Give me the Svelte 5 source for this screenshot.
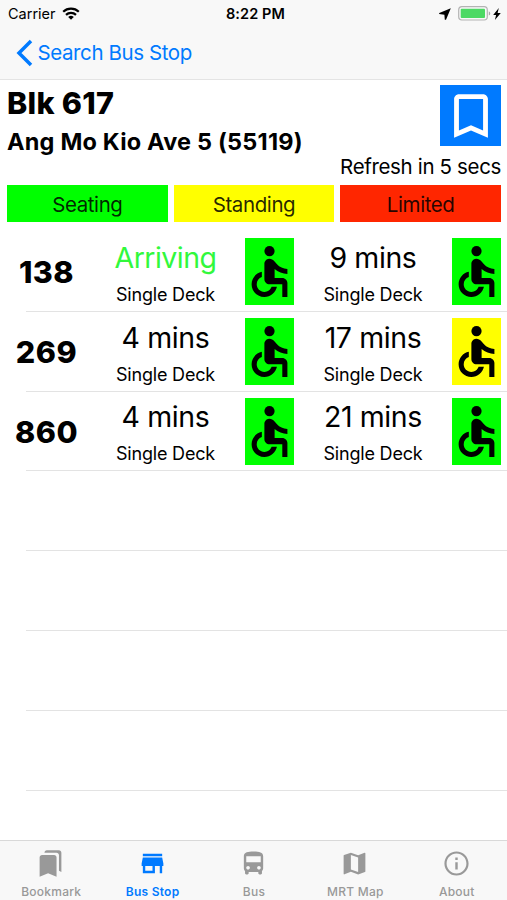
<script>
  const stop = { name: "Blk 617", road: "Ang Mo Kio Ave 5 (55119)" };
  const refreshIn = 5;

  const legend = [
    { label: "Seating", load: "seating" },
    { label: "Standing", load: "standing" },
    { label: "Limited", load: "limited" },
  ];

  const services = [
    {
      number: "138",
      arrivals: [
        { time: "Arriving", deck: "Single Deck", load: "seating" },
        { time: "9 mins", deck: "Single Deck", load: "seating" },
      ],
    },
    {
      number: "269",
      arrivals: [
        { time: "4 mins", deck: "Single Deck", load: "seating" },
        { time: "17 mins", deck: "Single Deck", load: "standing" },
      ],
    },
    {
      number: "860",
      arrivals: [
        { time: "4 mins", deck: "Single Deck", load: "seating" },
        { time: "21 mins", deck: "Single Deck", load: "seating" },
      ],
    },
  ];
  const emptyRows = [1, 2, 3, 4];

  const tabs = [
    { label: "Bookmark", icon: "M19 18l2 1V3c0-1.1-.9-2-2-2H8.99C7.89 1 7 1.9 7 3h10c1.1 0 2 .9 2 2v13zM15 5H5c-1.1 0-2 .9-2 2v16l7-3 7 3V7c0-1.1-.9-2-2-2z" },
    { label: "Bus Stop", icon: "M20 4H4v2h16V4zm1 10v-2l-1-5H4l-1 5v2h1v6h10v-6h4v6h2v-6h1zm-9 4H6v-4h6v4z" },
    { label: "Bus", icon: "M4 16c0 .88.39 1.67 1 2.22V20c0 .55.45 1 1 1h1c.55 0 1-.45 1-1v-1h8v1c0 .55.45 1 1 1h1c.55 0 1-.45 1-1v-1.78c.61-.55 1-1.34 1-2.22V6c0-3.5-3.58-4-8-4s-8 .5-8 4v10zm3.500 1c-.83 0-1.500-.67-1.500-1.500S6.670 14 7.500 14s1.500.67 1.500 1.500S8.330 17 7.500 17zm9 0c-.83 0-1.500-.67-1.500-1.500s.67-1.500 1.500-1.500 1.500.67 1.500 1.500-.67 1.500-1.500 1.500zm1.500-6H6V6h12v5z" },
    { label: "MRT Map", icon: "M20.500 3l-.16.03L15 5.100 9 3 3.360 4.900c-.21.07-.36.25-.36.48V20.500c0 .28.22.5.5.5l.16-.03L9 18.900l6 2.100 5.640-1.900c.21-.07.36-.25.36-.48V3.500c0-.28-.22-.5-.5-.5zM15 19l-6-2.110V5l6 2.110V19z" },
    { label: "About", icon: "M11 17h2v-6h-2v6zm1-15C6.480 2 2 6.480 2 12s4.480 10 10 10 10-4.480 10-10S17.520 2 12 2zm0 18.200c-4.520 0-8.200-3.680-8.200-8.200S7.480 3.800 12 3.800s8.200 3.680 8.200 8.200-3.680 8.200-8.200 8.200zM11 9h2V7h-2v2z" },
  ];
  let activeTab = "Bus Stop";
</script>

<div class="screen">
  <header>
    <div class="status">
      <div class="carrier">
        <span>Carrier</span>
        <svg width="18" height="13" viewBox="0 0 18 13" fill="none" stroke="#000" stroke-width="2.200">
          <path d="M1.200 4.800a11.200 11.200 0 0 1 15.600 0M4 7.900a7.200 7.200 0 0 1 10 0" />
          <path d="M6.200 10a4 4 0 0 1 5.600 0L9 12.800z" fill="#000" stroke="none" />
        </svg>
      </div>
      <span class="clock">8:22 PM</span>
      <div class="power">
        <svg width="12" height="12" viewBox="0 0 12 12"><path d="M11.800.2L.3 5l-.2 1.100 5.300.6.4 5 1.200.1z" /></svg>
        <svg class="battery" width="33" height="15" viewBox="0 0 33 15">
          <rect x=".7" y=".7" width="28.600" height="13.300" rx="3.200" fill="#f8f8f8" stroke="#b3b3b3" stroke-width="1.200" />
          <rect x="2.700" y="2.700" width="24.300" height="9.300" rx="1" fill="#4cd964" />
          <path d="M30.800 5.200c2 .8 2 3.600 0 4.400z" fill="#a8a8a8" />
        </svg>
        <svg width="8" height="12" viewBox="0 0 8 12"><path d="M5.800 0L.2 6.900h2.900L1.900 12l5.900-7.100H4.600z" /></svg>
      </div>
    </div>
    <button type="button" class="back">
      <svg width="17" height="28" viewBox="0 0 17 28" fill="none" stroke="#007aff" stroke-width="3.500"><path d="M15 2L3 14l12 12" /></svg>
      <span>Search Bus Stop</span>
    </button>
  </header>

  <main>
    <section class="stop">
      <div>
        <h1>{stop.name}</h1>
        <h2>{stop.road}</h2>
      </div>
      <button type="button" class="save" aria-label="Bookmark stop">
        <svg width="58" height="58" viewBox="0 0 24 24" fill="#fff"><path d="M17 3H7c-1.100 0-1.990.9-1.990 2L5 21l7-3 7 3V5c0-1.100-.9-2-2-2zm0 15l-5-2.180L7 18V5h10v13z" /></svg>
      </button>
    </section>
    <p class="refresh"><span>Refresh in {refreshIn} secs</span></p>

    <div class="legend">
      {#each legend as item}
        <div class={item.load}><span>{item.label}</span></div>
      {/each}
    </div>

    <div class="services">
      {#each services as service}
        <article class="row">
          <strong class="number">{service.number}</strong>
          {#each service.arrivals as arrival}
            <div class="arrival">
              <span class="time" class:arriving={arrival.time === "Arriving"}>{arrival.time}</span>
              <span class="deck">{arrival.deck}</span>
            </div>
            <div class="access {arrival.load}">
              <svg width="49" height="67" viewBox="2.450 -1.100 19.100 26.200">
                <circle cx="12" cy="4" r="2" />
                <path d="M19 13v-2c-1.540.02-3.090-.75-4.070-1.830l-1.290-1.430c-.17-.19-.38-.34-.61-.45-.01 0-.01-.01-.02-.01H13c-.35-.2-.75-.3-1.190-.26C10.760 7.110 10 8.040 10 9.090V15c0 1.100.9 2 2 2h5v5h2v-5.500c0-1.100-.9-2-2-2h-3v-3.450c1.290 1.070 3.250 1.940 5 1.950zm-6.170 5c-.41 1.160-1.520 2-2.830 2-1.660 0-3-1.340-3-3 0-1.310.84-2.410 2-2.830V12.100c-2.280.46-4 2.480-4 4.900 0 2.760 2.240 5 5 5 2.420 0 4.440-1.720 4.900-4h-2.070z" />
              </svg>
            </div>
          {/each}
        </article>
      {/each}
      {#each emptyRows as _}
        <div class="row"></div>
      {/each}
    </div>
  </main>

  <nav>
    {#each tabs as tab}
      <button type="button" class:active={tab.label === activeTab} on:click={() => (activeTab = tab.label)}>
        <svg viewBox="0 0 24 24" fill="currentColor"><path d={tab.icon} /></svg>
        <span>{tab.label}</span>
      </button>
    {/each}
  </nav>
</div>

<style>
  :global(body) { margin: 0; background: #fff; }
  .screen { display: flex; flex-direction: column; height: 900px; overflow: hidden; font-family: Inter, "Liberation Sans", sans-serif; color: #000; white-space: nowrap; }
  .screen * { box-sizing: border-box; }
  button { border: 0; background: none; padding: 0; font: inherit; }
  svg { display: block; flex: none; }

  header { height: 80px; background: #f8f8f8; border-bottom: 1px solid #e4e4e4; }
  .status { display: grid; grid-template-columns: 1fr auto 1fr; align-items: center; height: 27px; padding: 0 6px 0 8px; font-size: 14.500px; }
  .carrier { display: flex; align-items: center; gap: 6px; }
  .clock { padding-left: 2px; font-weight: 600; letter-spacing: 0.1px; }
  .power { display: flex; align-items: center; justify-content: flex-end; }
  .battery { margin: 0 2px 0 7px; }
  .back { display: flex; align-items: center; gap: 4.500px; height: 51px; padding-left: 16px; color: #007aff; font-size: 20.500px; letter-spacing: -0.4px; }

  main { flex: 1; }
  .stop { display: flex; justify-content: space-between; padding: 5px 6px 0 7px; height: 74px; }
  h1 { margin: 0; font-size: 30.500px; line-height: 36px; font-weight: 800; letter-spacing: 0.3px; }
  h2 { margin: 6px 0 0; font-size: 23.500px; line-height: 29px; font-weight: 700; letter-spacing: 0.2px; }
  .save { display: grid; place-items: center; width: 61px; height: 61px; background: #007aff; }
  .refresh { margin: 0; padding-right: 6px; text-align: right; font-size: 20.500px; line-height: 26px; letter-spacing: -0.35px; }
  .legend { display: grid; grid-template-columns: repeat(3, 1fr); gap: 6px; padding: 5px 6px 0 7px; }
  .legend div { height: 37px; padding-top: 1px; display: flex; align-items: center; justify-content: center; font-size: 20.500px; letter-spacing: -0.4px; color: rgba(0, 0, 0, 0.86); }
  .seating { background: #00ff00; }
  .standing { background: #ffff00; }
  .limited { background: #ff2600; }

  .services { margin-top: 10px; }
  .row { display: grid; grid-template-columns: 93px 152px 49px 158px 49px; align-items: center; height: 79.800px; background: linear-gradient(#e3e3e3, #e3e3e3) 26px 100% / 100% 1px no-repeat; }
  .number { text-align: center; font-size: 30.500px; font-weight: 800; letter-spacing: 0.5px; }
  .arrival { display: flex; flex-direction: column; align-items: center; padding-top: 6px; }
  .number + .arrival { padding-right: 7px; }
  .time { font-size: 28.500px; line-height: 36px; letter-spacing: -0.4px; }
  .arriving { color: #32f83c; letter-spacing: -0.55px; }
  .deck { margin-top: 3px; font-size: 18px; line-height: 31px; letter-spacing: -0.2px; }
  .access { width: 49px; height: 67px; }

  nav { display: grid; grid-template-columns: repeat(5, 1fr); height: 60px; border-top: 1px solid #d9d9d9; background: #f8f8f8; color: #999; }
  nav button { display: flex; flex-direction: column; align-items: center; color: inherit; font-size: 12px; font-weight: 500; letter-spacing: 0.25px; }
  nav svg { width: 29px; height: 29px; margin-top: 8px; }
  nav span { margin-top: 6px; padding-left: 1px; line-height: 16px; }
  nav .active { color: #007aff; font-weight: 600; }
</style>
